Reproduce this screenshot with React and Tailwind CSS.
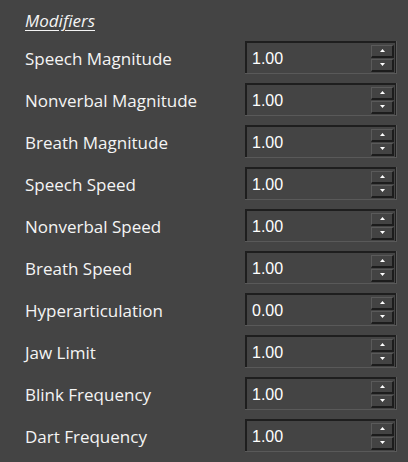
import React from 'react';

const rows = [
    { label: 'Speech Magnitude', value: '1.00' },
    { label: 'Nonverbal Magnitude', value: '1.00' },
    { label: 'Breath Magnitude', value: '1.00' },
    { label: 'Speech Speed', value: '1.00' },
    { label: 'Nonverbal Speed', value: '1.00' },
    { label: 'Breath Speed', value: '1.00' },
    { label: 'Hyperarticulation', value: '0.00' },
    { label: 'Jaw Limit', value: '1.00' },
    { label: 'Blink Frequency', value: '1.00' },
    { label: 'Dart Frequency', value: '1.00' },
];

const SpinButton = ({ up }) => (
    <div className="flex h-[13px] w-[23px] items-center justify-center border-t border-l border-t-[#5a5a5a] border-l-[#5a5a5a] border-b-2 border-r-2 border-b-[#1c1c1c] border-r-[#1c1c1c] bg-[#434343]">
        <svg width="5" height="3" viewBox="0 0 5 3">
            {up ? <polygon points="2.5,0 5,3 0,3" fill="#ffffff" /> : <polygon points="0,0 5,0 2.5,3" fill="#ffffff" />}
        </svg>
    </div>
);

const SpinBox = ({ value }) => (
    <div className="flex h-[33px] w-[152px] border-b border-r border-[#595959]">
        <div className="flex flex-1 items-center justify-between border-t-2 border-l-2 border-t-[#1e1e1e] border-l-[#1e1e1e] border-r border-r-[#1e1e1e] pl-[5px] pr-[1px]">
            <span className="pt-[1px] text-[16px] text-white" style={{ fontFamily: '"Liberation Sans", Arial, sans-serif' }}>
                {value}
            </span>
            <div className="flex flex-col gap-[1px]">
                <SpinButton up />
                <SpinButton />
            </div>
        </div>
    </div>
);

export default function App() {
    return (
        <div
            className="h-[462px] w-[408px] overflow-hidden bg-[#444444] pl-[25px] pr-[11px] pt-[9px] text-[#f4f4f4]"
            style={{ fontFamily: '"Open Sans", "Noto Sans", sans-serif' }}
        >
            <div className="h-[32px] text-[17px] italic underline underline-offset-[3px] leading-[24px]">
                <span>Modifiers</span>
            </div>
            <div className="flex flex-col gap-[9px]">
                {rows.map((row) => (
                    <div key={row.label} className="flex h-[33px] items-center justify-between">
                        <span className="pt-[2px] text-[17px] leading-none">{row.label}</span>
                        <SpinBox value={row.value} />
                    </div>
                ))}
            </div>
        </div>
    );
}
